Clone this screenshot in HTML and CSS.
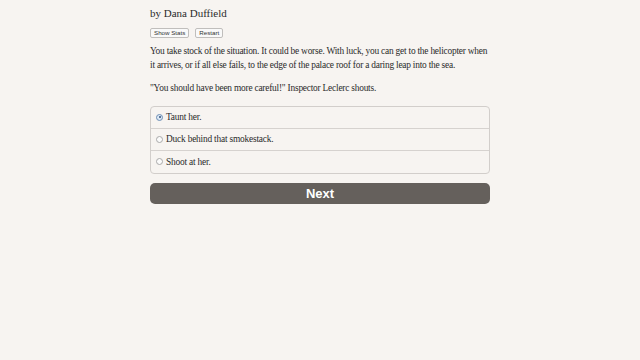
FILE: index.html
```html
<!DOCTYPE html>
<html lang="en">
<head>
  <meta charset="UTF-8" />
  <title>Choice of the Deathless</title>
  <link rel="stylesheet" href="styles.css">
</head>
<body>
  <div class="container">
    <div class="author">by Dana Duffield</div>
    <div class="buttons">
      <button class="small-btn">Show Stats</button>
      <button class="small-btn">Restart</button>
    </div>
    <div class="text">
      <p>You take stock of the situation. It could be worse. With luck, you can get to the helicopter when it arrives, or if all else fails, to the edge of the palace roof for a daring leap into the sea.</p>
      <p>"You should have been more careful!" Inspector Leclerc shouts.</p>
    </div>
    <form class="choice">
      <label class="option"><span class="radio checked"></span>Taunt her.</label>
      <label class="option"><span class="radio"></span>Duck behind that smokestack.</label>
      <label class="option"><span class="radio"></span>Shoot at her.</label>
    </form>
    <button class="next">Next</button>
  </div>
</body>
</html>
```

FILE: styles.css
```css
* {
  box-sizing: border-box;
  margin: 0;
  padding: 0;
}

html, body {
  background: #f7f4f1;
  color: #2b2b2b;
  font-family: "Liberation Serif", serif;
  min-height: 100vh;
}

.container {
  width: 340px;
  margin: 0 auto;
  padding-top: 6px;
}

.author {
  font-size: 11px;
  line-height: 14px;
}

.buttons {
  display: flex;
  gap: 6px;
  margin-top: 8px;
}

.small-btn {
  font-family: "Liberation Sans", sans-serif;
  font-size: 6.2px;
  height: 10px;
  line-height: 8px;
  padding: 0 3px;
  background: #f9f9f9;
  border: 1px solid #c0bebc;
  border-radius: 2px;
  color: #333;
}

.text {
  margin-top: 7px;
  font-size: 9.4px;
  letter-spacing: -0.22px;
  line-height: 13.5px;
}

.text p {
  margin-bottom: 10px;
}

.choice {
  margin-top: 3px;
  border: 1px solid #d2cecb;
  border-radius: 4px;
  display: flex;
  flex-direction: column;
  font-size: 9.4px;
  letter-spacing: -0.2px;
}

.option {
  display: flex;
  align-items: center;
  gap: 3px;
  height: 22px;
  padding-left: 5px;
  border-bottom: 1px solid #d6d2cf;
}

.option:last-child {
  border-bottom: none;
}

.radio {
  width: 7px;
  height: 7px;
  border-radius: 50%;
  border: 1px solid #a9a9a9;
  background: #fbfbfb;
  position: relative;
}

.radio.checked {
  border-color: #6f8fb5;
  background: #dce8f5;
}

.radio.checked::after {
  content: "";
  position: absolute;
  left: 1.5px;
  top: 1.5px;
  width: 2px;
  height: 2px;
  border-radius: 50%;
  background: #2f4f7a;
}

.next {
  display: block;
  width: 100%;
  margin-top: 9px;
  height: 21px;
  background: #65605c;
  color: #fff;
  border: none;
  border-radius: 5px;
  font-family: "Liberation Sans", sans-serif;
  font-weight: bold;
  font-size: 13px;
}
```
